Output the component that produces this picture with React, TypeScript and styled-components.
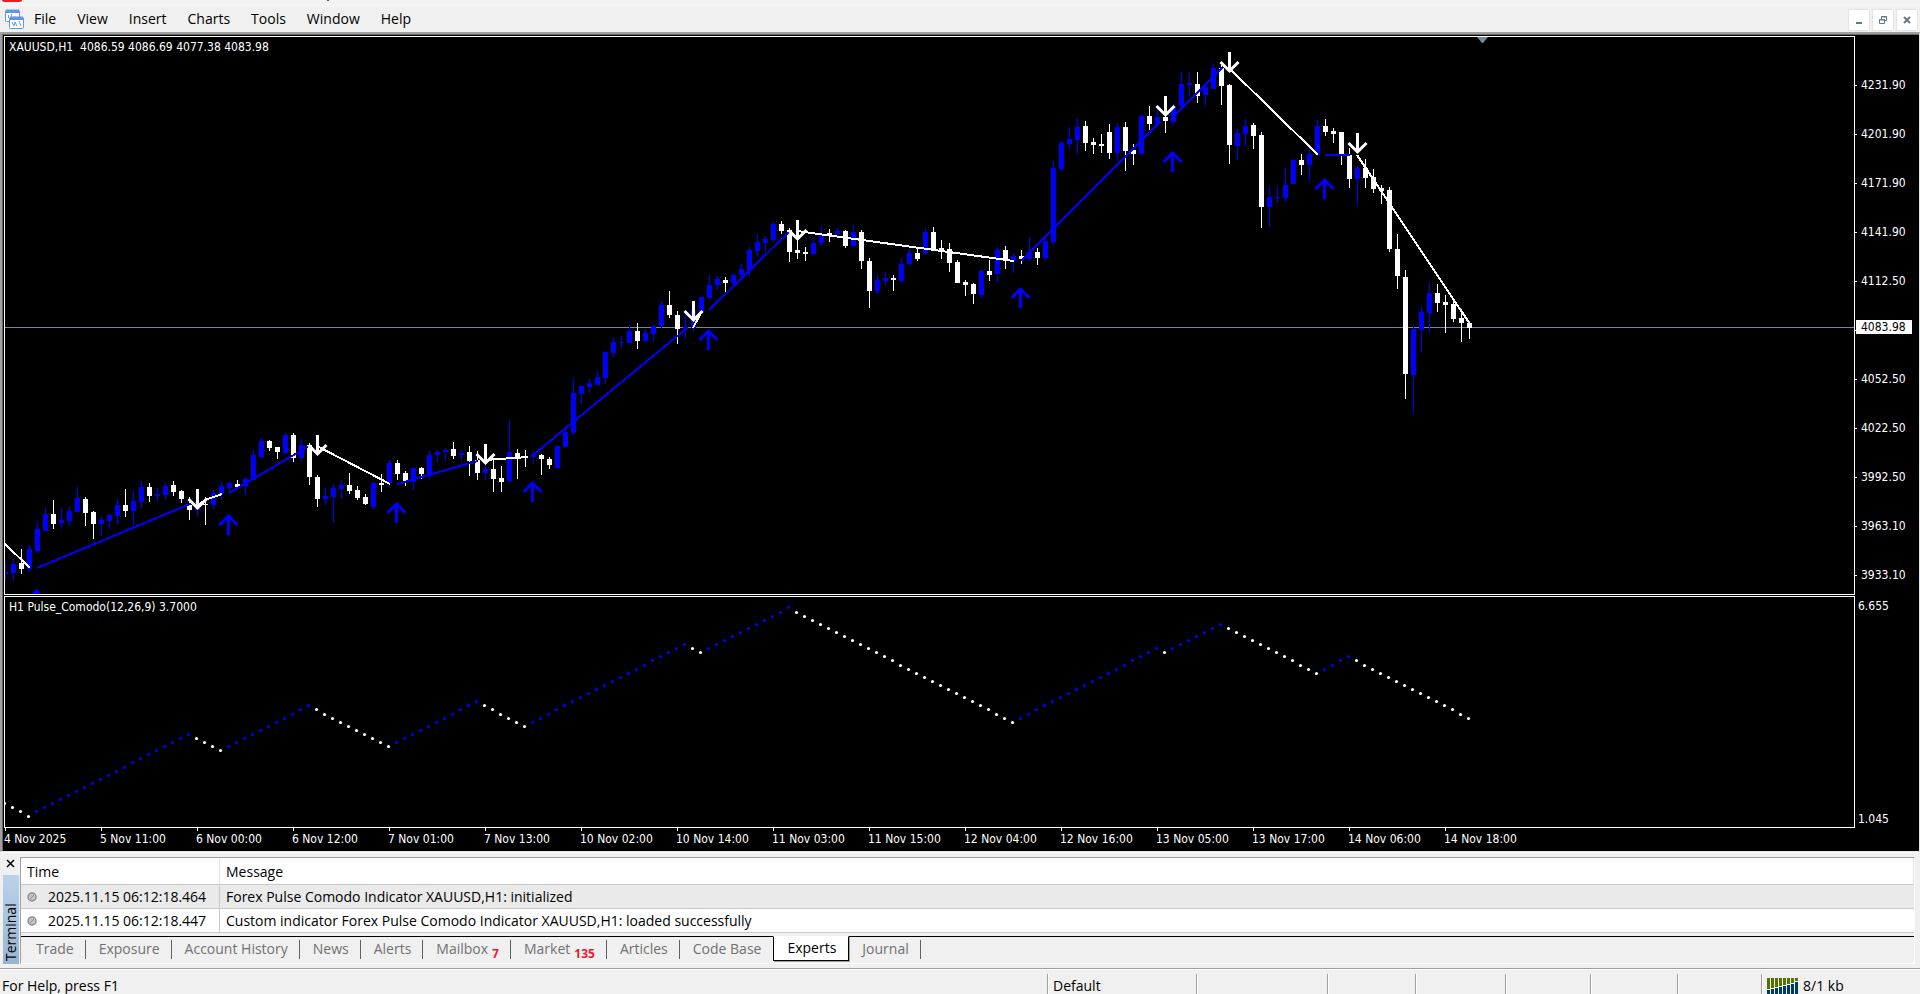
import React from "react";
import styled, { createGlobalStyle } from "styled-components";

const GlobalStyle = createGlobalStyle`
  * { box-sizing: border-box; }
  body {
    margin: 0;
    background: #f0f0f0;
    color: #000;
    font: 14px/20px "Open Sans", "Noto Sans", sans-serif;
  }
  button { font: inherit; color: inherit; border: 0; padding: 0; background: none; }
`;

const UP = "#0000ff";
const DOWN = "#ffffff";
const SLATE = "#778899";
const CHART_FONT = `12px/15px "DejaVu Sans Condensed", "Noto Sans", sans-serif`;

/* ---------- data ---------- */

// Each bar: direction, high, body top, body bottom, low
type Bar = [string, number, number, number, number];
const BAR_DATA = `
u563 572 574 580|u559 564 573 581|d549 563 569 574|u545 549 569 572|u522 529 551 553|u508 514 531 532|d500 514 524 529|u508 520 523 529
u507 511 521 526|u487 498 512 512|d497 499 513 526|d511 512 524 539|u516 520 524 536|u514 515 521 529|u499 505 516 524|d489 505 511 517
u491 501 511 527|u481 487 502 508|d483 487 496 502|u488 494 496 501|u483 486 495 500|d481 485 492 496|d490 491 499 503|d497 505 510 520
u500 502 510 516|d497 504 505 525|u490 493 505 509|u481 486 494 500|u482 483 488 492|d480 484 487 487|u477 479 486 495|u450 455 480 480
u438 441 457 458|d440 441 448 451|d447 447 452 459|u433 435 453 454|d433 435 458 462|u439 445 458 461|d443 445 477 485|d475 477 499 507
u488 496 499 505|u484 488 497 523|u480 485 489 499|d473 485 491 494|d486 490 498 500|d494 497 504 505|u482 483 507 509|d474 483 485 492
u460 463 483 488|d460 463 474 480|d471 473 481 486|u468 468 482 490|d467 468 474 479|u451 455 475 479|u450 452 455 462|u448 450 452 461
d442 449 456 459|u450 453 455 461|d446 452 461 476|d451 460 473 480|u460 469 473 480|d460 469 479 492|d466 478 482 492|u420 452 481 483
d449 453 458 479|d450 456 457 467|u451 454 457 464|d454 455 459 475|d457 459 465 469|u445 446 468 469|u426 432 447 448|u378 393 433 435
u385 386 394 404|u379 383 387 393|u372 377 385 385|u351 352 378 384|u337 342 353 357|u336 342 343 348|u326 331 343 343|d323 331 341 349
u329 333 341 342|u325 326 334 342|u301 305 326 328|d291 305 315 318|d311 315 329 344|u313 327 329 339|u310 310 328 332|u297 297 312 312
u275 285 298 300|u276 279 285 290|d277 280 283 292|u274 275 283 286|u264 269 275 278|u246 250 270 276|u234 242 251 257|u236 239 243 253
u222 224 240 242|d221 224 231 234|d228 230 252 262|d230 250 253 259|d247 252 254 261|u239 243 254 255|u226 235 243 246|d229 233 235 242
u228 231 234 238|d230 231 246 248|u225 232 246 247|d230 232 261 269|d258 261 291 308|u275 280 291 294|u272 278 281 285|d275 278 280 291
u258 264 281 283|u249 253 264 266|d248 253 259 261|u228 232 253 255|d227 232 250 250|d240 248 251 259|d243 249 263 272|d260 262 283 283
d280 282 285 296|d283 284 294 304|u270 271 295 298|d260 271 275 281|u247 250 274 282|d246 250 261 269|u253 256 261 273|d250 256 259 264
u237 252 259 261|d248 252 258 265|u235 241 258 261|u161 168 242 245|u141 143 169 171|u127 139 144 150|u118 127 140 154|d121 126 143 151
d138 142 145 154|d134 144 146 153|d124 132 153 159|u123 127 153 161|d122 127 151 171|d144 150 154 165|u115 116 154 155|d106 116 124 130
u109 117 124 127|d115 117 121 133|u104 106 122 125|u72 84 106 107|u73 83 85 97|d72 84 96 103|u84 87 95 106|u63 68 89 89
d65 68 86 105|d84 85 145 164|u129 133 146 160|u119 126 134 146|d123 125 136 149|d132 135 207 228|u186 197 207 227|u186 197 198 203
u168 185 198 202|u159 160 184 184|d154 160 165 175|u148 154 165 182|u120 126 155 157|d119 126 132 136|d128 131 134 143|d132 132 154 165
d148 155 179 188|u166 168 179 206|d159 168 178 188|d169 177 189 193|d185 188 191 204|d187 190 249 252|d234 249 276 289|d270 277 374 399
u327 329 375 414|u307 312 330 353|u283 293 313 333|d284 293 303 312|d295 302 305 333|d298 304 319 322|d312 318 323 342|d322 323 328 339`;

const BARS: Bar[] = BAR_DATA.trim().split(/[|\n]/).map((s) => {
  const [h, t, b, l] = s.slice(1).split(" ").map(Number);
  return [s[0], h, t, b, l];
});

const TREND: [string, string][] = [
  [DOWN, "5,544 30,568"],
  [UP, "37,568 190,504"],
  [DOWN, "197,506 205,500 222,494"],
  [UP, "229,493 309,446"],
  [DOWN, "317,446 390,484"],
  [UP, "397,484 478,461"],
  [DOWN, "485,460 528,457"],
  [UP, "532,456 687,328"],
  [DOWN, "693,328 702,311"],
  [UP, "709,310 790,231"],
  [DOWN, "797,231 1014,261"],
  [UP, "1021,261 1158,124"],
  [UP, "1173,117 1222,68"],
  [DOWN, "1229,68 1318,155"],
  [UP, "1325,155 1350,155"],
  [DOWN, "1357,155 1470,324"],
];

const SELLS = [[197, 489], [317, 435], [485, 444], [693, 301], [797, 220], [1165, 96], [1229, 52], [1357, 133]];
const BUYS = [[36, 589], [228, 514], [396, 502], [532, 481], [708, 329], [1020, 287], [1172, 151], [1324, 178]];

// Runs of the pulse indicator: number of bars and direction
const RUNS: [number, number][] = [
  [3, -1], [20, 1], [4, -1], [11, 1], [10, -1], [11, 1], [6, -1], [20, 1], [2, -1],
  [11, 1], [28, -1], [18, 1], [1, -1], [7, 1], [12, -1], [4, 1], [15, -1],
];

function pulsePoints() {
  let value = 16;
  const points = [{ value, dir: -1 }];
  RUNS.forEach(([count, dir]) => {
    for (let i = 0; i < count; i += 1) {
      value += dir;
      points.push({ value, dir });
    }
  });
  return points;
}

const PRICES = ["4231.90", "4201.90", "4171.90", "4141.90", "4112.50", "4082.50", "4052.50", "4022.50", "3992.50", "3963.10", "3933.10"];
const DATES = [
  "4 Nov 2025", "5 Nov 11:00", "6 Nov 00:00", "6 Nov 12:00", "7 Nov 01:00", "7 Nov 13:00", "10 Nov 02:00", "10 Nov 14:00",
  "11 Nov 03:00", "11 Nov 15:00", "12 Nov 04:00", "12 Nov 16:00", "13 Nov 05:00", "13 Nov 17:00", "14 Nov 06:00", "14 Nov 18:00",
];
const MENU = ["File", "View", "Insert", "Charts", "Tools", "Window", "Help"];
const TABS: { name: string; badge?: string }[] = [
  { name: "Trade" }, { name: "Exposure" }, { name: "Account History" }, { name: "News" }, { name: "Alerts" },
  { name: "Mailbox", badge: "7" }, { name: "Market", badge: "135" }, { name: "Articles" }, { name: "Code Base" },
  { name: "Experts" }, { name: "Journal" },
];
const LOG = [
  ["2025.11.15 06:12:18.464", "Forex Pulse Comodo Indicator XAUUSD,H1: initialized"],
  ["2025.11.15 06:12:18.447", "Custom indicator Forex Pulse Comodo Indicator XAUUSD,H1: loaded successfully"],
];

/* ---------- frame ---------- */

const Page = styled.div`
  display: flex;
  flex-direction: column;
  min-height: 100vh;
  overflow: hidden;
`;

const TitleEdge = styled.div`
  height: 7px;
  background: #f3f3f3;
  svg { display: block; }
`;

const MenuBar = styled.header`
  display: flex;
  align-items: center;
  height: 25px;
  padding: 0 2px 0 4px;
`;

const Menu = styled.nav`
  display: flex;
  gap: 21px;
  margin-left: 9px;
  flex: 1;
`;

const MenuItem = styled.button`
  line-height: 18px;
  padding-bottom: 2px;
`;

const WindowButtons = styled.div`
  display: flex;
  gap: 2px;
`;

const WindowButton = styled.button`
  width: 22px;
  height: 22px;
  display: grid;
  place-items: center;
  background: #fff;
  border: 1px solid #e4e4e4;
  border-radius: 2px;
`;

/* ---------- chart ---------- */

const ChartWindow = styled.main`
  display: grid;
  grid-template-columns: 1fr 64px;
  grid-template-rows: 559px 232px 22px;
  row-gap: 1px;
  padding: 2px 0 0 2px;
  background: #000;
  color: #fff;
  font: ${CHART_FONT};
  border-style: solid;
  border-width: 2px 1px 1px 2px;
  border-color: #a0a0a0 #e3e3e3 #e3e3e3 #a0a0a0;
  box-shadow: inset 1px 1px 0 #696969;
`;

const Pane = styled.section`
  position: relative;
  min-width: 0;
  border: 1px solid #fff;
  overflow: hidden;
  svg { display: block; width: 100%; height: 100%; }
`;

const PaneTitle = styled.h2`
  position: absolute;
  top: 3px;
  left: 4px;
  margin: 0;
  font: inherit;
  white-space: pre;
`;

const PriceAxis = styled.div`
  position: relative;
  display: flex;
  flex-direction: column;
  gap: 34px;
  padding-top: 42px;
`;

const PriceTick = styled.div`
  display: flex;
  align-items: center;
  gap: 4px;
  height: 15px;
  line-height: 17px;
  &::before { content: ""; width: 2px; height: 1px; background: #fff; }
`;

const CurrentPrice = styled.div`
  position: absolute;
  top: 284px;
  left: 1px;
  width: 56px;
  height: 14px;
  padding-left: 5px;
  background: #fff;
  color: #000;
`;

const ValueAxis = styled.div`
  display: flex;
  flex-direction: column;
  justify-content: space-between;
  padding: 3px 3px 1px;
`;

const TimeAxis = styled.div`
  display: flex;
  grid-column: 1 / -1;
  margin-top: -1px;
  overflow: hidden;
`;

const TimeTick = styled.div`
  flex: 0 0 96px;
  white-space: nowrap;
  &::before { content: ""; display: block; width: 1px; height: 3px; margin: 0 0 1px 1px; background: #fff; }
`;

/* ---------- terminal ---------- */

const Terminal = styled.section`
  display: flex;
  padding: 4px 5px 4px 0;
  border-top: 1px solid #fff;
`;

const TerminalSide = styled.div`
  display: flex;
  flex-direction: column;
  align-items: flex-start;
  width: 20px;
  padding: 2px 0 0 3px;
`;

const CloseButton = styled.button`
  display: grid;
  place-items: center;
  width: 14px;
  height: 9px;
`;

const SideLabel = styled.div`
  flex: 1;
  width: 16px;
  margin-top: 7px;
  padding-top: 3px;
  line-height: 16px;
  background: linear-gradient(to top, #bad2eb, #99b4d1);
  writing-mode: vertical-rl;
  transform: rotate(180deg);
`;

const TerminalBody = styled.div`
  flex: 1;
  min-width: 0;
  border: 1px solid #a0a0a0;
  border-right-color: #fff;
  border-bottom-color: #fff;
`;

const LogTable = styled.table`
  width: 100%;
  table-layout: fixed;
  border-spacing: 0;
  margin-bottom: 3px;
  background: #fff;
`;

const HeadCell = styled.th<{ $first?: boolean }>`
  width: ${(p) => (p.$first ? "199px" : "auto")};
  height: 27px;
  padding: 2px 0 0 6px;
  text-align: left;
  font-weight: 400;
  border-right: 1px solid #e2e2e2;
  border-bottom: 1px solid #c8c8c8;
`;

const LogRow = styled.tr<{ $shaded: boolean }>`
  background: ${(p) => (p.$shaded ? "#eaeaea" : "#fff")};
`;

const LogCell = styled.td<{ $time?: boolean }>`
  height: 24px;
  padding: 0 0 0 6px;
  white-space: nowrap;
  overflow: hidden;
  border-bottom: 1px solid #c8c8c8;
  border-right: ${(p) => (p.$time ? "1px solid #c8c8c8" : "0")};
  svg { margin-right: 11px; }
`;

const Tabs = styled.div`
  display: flex;
  height: 27px;
  padding-left: 2px;
  border-top: 1px solid #000;
`;

const Tab = styled.button<{ $active: boolean }>`
  position: relative;
  height: 25px;
  padding: 0 12px 1px 13px;
  color: ${(p) => (p.$active ? "#000" : "#707070")};
  ${(p) =>
    p.$active
      ? `margin-top: -1px;
         background: #fff;
         border: 1px solid #000;
         border-top-color: #fff;
         box-shadow: 1px 1px 0 #a0a0a0;`
      : `&::after {
           content: "";
           position: absolute;
           right: 0;
           top: 3px;
           height: 19px;
           border-right: 1px solid #606060;
         }`}
  &:has(+ [aria-selected="true"])::after { display: none; }
`;

const Badge = styled.span`
  position: relative;
  top: 4px;
  margin-left: 4px;
  font-size: 12px;
  line-height: 12px;
  font-weight: 700;
  color: #f01830;
`;

/* ---------- status bar ---------- */

const StatusBar = styled.footer`
  display: flex;
  flex: 1;
  align-items: stretch;
  min-height: 26px;
  padding-top: 5px;
  border-top: 1px solid #a0a0a0;
  box-shadow: inset 0 1px 0 #fff;
`;

const StatusCell = styled.div<{ $width?: number }>`
  flex: ${(p) => (p.$width ? `0 0 ${p.$width}px` : "1")};
  display: flex;
  align-items: center;
  gap: 5px;
  padding: 2px 0 0 ${(p) => (p.$width ? 5 : 2)}px;
  border-left: ${(p) => (p.$width ? "1px solid #a0a0a0" : "0")};
  box-shadow: ${(p) => (p.$width ? "inset 1px 0 0 #fff" : "none")};
`;

/* ---------- drawings ---------- */

const AppIcon = () => (
  <svg width="21" height="21" viewBox="0 0 21 21" aria-hidden="true">
    <g fill="#fff" stroke="#6495ed">
      <rect x="1.5" y="1.5" width="14" height="11" rx="1" />
      <path d="M1 3h15M2 1.5h13" strokeWidth="2" />
      <path d="M4.500 9V6M7.500 10V5M9.500 8h2" />
      <rect x="5.500" y="8.500" width="14" height="11" rx="1" />
      <path d="M5 10h15M6 8.500h13" strokeWidth="2" />
      <path d="M8 13l2 4 1-4 2 4M15 12l2 5" fill="none" />
    </g>
  </svg>
);

const WindowGlyph = ({ kind }: { kind: string }) => (
  <svg width="10" height="10" viewBox="0 0 10 10" fill="none" stroke="#66788a" aria-hidden="true">
    {kind === "Minimize" && <path d="M2 8h6" strokeWidth="2" />}
    {kind === "Restore" && <path d="M1.500 4.500h5v4h-5zM1 5h6M3.500 4V1.500h5v4H7M3 2h6" />}
    {kind === "Close" && <path d="M2 2l6 6M8 2L2 8" strokeWidth="2" />}
  </svg>
);

const RowIcon = () => (
  <svg width="10" height="10" viewBox="0 0 10 10" aria-hidden="true">
    <circle cx="5" cy="5" r="4" fill="#c4c4c4" stroke="#8c8c8c" strokeWidth="1.400" />
    <path d="M3 7l4-4" stroke="#8c8c8c" />
  </svg>
);

const SignalBars = () => (
  <svg width="31" height="16" aria-hidden="true">
    {[11, 10, 9, 8, 7, 6, 5, 3].map((h, i) => (
      <g key={i}>
        <rect x={i * 4} y="0" width="3" height={h} fill="#557500" />
        <rect x={i * 4} y={h} width="3" height="1" fill="#fff" />
        <rect x={i * 4} y={h + 1} width="3" height={15 - h} fill="#003c5f" />
      </g>
    ))}
  </svg>
);

const PriceChart = () => (
  <svg role="img" aria-label="XAUUSD hourly candles">
    <g transform="translate(-5 -37)">
      <path d="M5 327.500H9000" stroke={SLATE} />
      <g shapeRendering="crispEdges">
        {BARS.map(([dir, h, t, b, l], i) => (
          <g key={i} fill={dir === "u" ? UP : DOWN}>
            <rect x={5 + i * 8} y={h} width="1" height={l - h} />
            <rect x={3 + i * 8} y={t} width="5" height={b - t} />
          </g>
        ))}
        {TREND.map(([color, points]) => (
          <polyline key={points} points={points} fill="none" stroke={color} strokeWidth="2" />
        ))}
      </g>
      <path d="M1477 37h11l-5 6h-1z" fill={SLATE} />
      {BUYS.map(([x, y]) => (
        <path key={x} d={`M${x + 0.5} ${y + 21}V${y + 2}M${x - 8.5} ${y + 11}l9 -9 9 9`} fill="none" stroke={UP} strokeWidth="3" />
      ))}
      {SELLS.map(([x, y]) => (
        <path key={x} d={`M${x + 0.5} ${y}v19M${x - 8.5} ${y + 10}l9 9 9 -9`} fill="none" stroke={DOWN} strokeWidth="3" />
      ))}
    </g>
  </svg>
);

const PulseChart = () => (
  <svg role="img" aria-label="Pulse Comodo indicator">
    <g transform="translate(-5 -597)">
      {pulsePoints().map(({ value, dir }, i) => (
        <circle
          key={i}
          cx={4.5 + i * 8}
          cy={Math.floor(817 - (value - 13) * 4.08) - 0.5}
          r="1.6"
          fill={dir > 0 ? UP : DOWN}
        />
      ))}
    </g>
  </svg>
);

export default function App() {
  return (
    <Page>
      <GlobalStyle />
      <TitleEdge>
        <svg width="400" height="3" aria-hidden="true">
          <path d="M2 0h20v1q-1 1-3 1H4Q2 2 2 0z" fill="#ec1c24" />
          <path d="M327 0h2v1h-2z" fill="#555" />
        </svg>
      </TitleEdge>
      <MenuBar>
        <AppIcon />
        <Menu>
          {MENU.map((m) => <MenuItem key={m}>{m}</MenuItem>)}
        </Menu>
        <WindowButtons>
          {["Minimize", "Restore", "Close"].map((k) => (
            <WindowButton key={k} aria-label={k}><WindowGlyph kind={k} /></WindowButton>
          ))}
        </WindowButtons>
      </MenuBar>

      <ChartWindow>
        <Pane>
          <PriceChart />
          <PaneTitle>{"XAUUSD,H1  4086.59 4086.69 4077.38 4083.98"}</PaneTitle>
        </Pane>
        <PriceAxis>
          {PRICES.map((p) => <PriceTick key={p}>{p}</PriceTick>)}
          <CurrentPrice>4083.98</CurrentPrice>
        </PriceAxis>
        <Pane>
          <PulseChart />
          <PaneTitle>H1 Pulse_Comodo(12,26,9) 3.7000</PaneTitle>
        </Pane>
        <ValueAxis>
          <span>6.655</span>
          <span>1.045</span>
        </ValueAxis>
        <TimeAxis>
          {DATES.map((d) => <TimeTick key={d}>{d}</TimeTick>)}
        </TimeAxis>
      </ChartWindow>

      <Terminal>
        <TerminalSide>
          <CloseButton aria-label="Close terminal">
            <svg width="9" height="9" viewBox="0 0 9 9" stroke="#000" strokeWidth="1.500" aria-hidden="true">
              <path d="M1 1l7 7M8 1L1 8" />
            </svg>
          </CloseButton>
          <SideLabel>Terminal</SideLabel>
        </TerminalSide>
        <TerminalBody>
          <LogTable>
            <thead>
              <tr>
                <HeadCell $first>Time</HeadCell>
                <HeadCell>Message</HeadCell>
              </tr>
            </thead>
            <tbody>
              {LOG.map(([time, message], i) => (
                <LogRow key={time} $shaded={i === 0}>
                  <LogCell $time><RowIcon />{time}</LogCell>
                  <LogCell>{message}</LogCell>
                </LogRow>
              ))}
            </tbody>
          </LogTable>
          <Tabs role="tablist">
            {TABS.map(({ name, badge }) => (
              <Tab key={name} role="tab" $active={name === "Experts"} aria-selected={name === "Experts"}>
                {name}
                {badge && <Badge>{badge}</Badge>}
              </Tab>
            ))}
          </Tabs>
        </TerminalBody>
      </Terminal>

      <StatusBar>
        <StatusCell>For Help, press F1</StatusCell>
        <StatusCell $width={149}>Default</StatusCell>
        <StatusCell $width={131} />
        <StatusCell $width={88} />
        <StatusCell $width={90} />
        <StatusCell $width={85} />
        <StatusCell $width={87} />
        <StatusCell $width={84} />
        <StatusCell $width={159}><SignalBars />8/1 kb</StatusCell>
      </StatusBar>
    </Page>
  );
}
